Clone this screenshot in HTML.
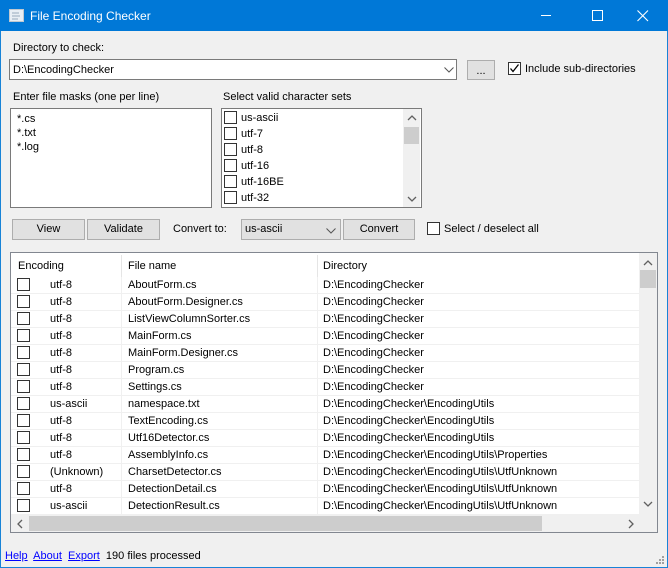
<!DOCTYPE html>
<html><head><meta charset="utf-8"><style>
*{box-sizing:border-box;margin:0;padding:0}
body{width:668px;height:568px;overflow:hidden;background:#f0f0f0;font-family:"Liberation Sans",sans-serif;font-size:11px;color:#000;position:relative}
.a{position:absolute;white-space:nowrap}
.win{position:absolute;left:0;top:0;width:668px;height:568px;border:1px solid #1883d7}
.title{position:absolute;left:0;top:0;width:668px;height:31px;background:#0078d7;color:#fff}
.box{position:absolute;background:#fff;border:1px solid #7a7a7a}
.btn{position:absolute;background:#e1e1e1;border:1px solid #adadad;text-align:center;line-height:19px}
.cb{position:absolute;width:13px;height:13px;border:1px solid #333;background:#fff}
.row{position:absolute;left:11px;width:628px;height:17px;border-bottom:1px solid #f0f0f0}
.row .cb{left:6px;top:1px}
.row span{position:absolute;top:2px}
.vl{position:absolute;top:0;width:1px;height:17px;background:#f0f0f0}
a{color:#0000ff;text-decoration:underline}
</style></head><body>
<div class="win"></div>
<div class="title">
<svg class="a" style="left:9px;top:9px" width="16" height="14"><rect x="0.5" y="0.5" width="14" height="12" fill="#e8eef4" stroke="#c0c8d0"/><path d="M3 4h7M3 7h8M3 10h6" stroke="#9ab" /></svg>
<div class="a" style="left:30px;top:9px;font-size:12px">File Encoding Checker</div>
<div class="a" style="left:541px;top:15px;width:10px;height:1px;background:#fff"></div>
<div class="a" style="left:592px;top:10px;width:11px;height:11px;border:1px solid #fff"></div>
<svg class="a" style="left:637px;top:10px" width="12" height="12"><path d="M0.5 0.5L11 11M11 0.5L0.5 11" stroke="#fff" stroke-width="1.1"/></svg>
</div>
<div class="a" style="left:13px;top:42px">Directory to check:</div>
<div class="box" style="left:9px;top:59px;width:448px;height:21px"><span class="a" style="left:3px;top:4px">D:\EncodingChecker</span>
<svg class="a" style="left:434px;top:7px" width="10" height="6"><path d="M0.5 0.5L5 5 9.5 0.5" fill="none" stroke="#555"/></svg></div>
<div class="btn" style="left:467px;top:60px;width:28px;height:20px;line-height:20px">...</div>
<div class="cb" style="left:508px;top:62px"><svg width="11" height="11" style="position:absolute;left:0;top:0"><path d="M1.5 5.5L4 8.5 9.5 1.5" fill="none" stroke="#000" stroke-width="1.3"/></svg></div>
<div class="a" style="left:525px;top:63px">Include sub-directories</div>
<div class="a" style="left:13px;top:91px">Enter file masks (one per line)</div>
<div class="a" style="left:223px;top:91px">Select valid character sets</div>
<div class="box" style="left:10px;top:108px;width:202px;height:100px;line-height:14px;padding:3px 0 0 6px">*.cs<br>*.txt<br>*.log</div>
<div class="box" style="left:221px;top:108px;width:201px;height:100px">
<div class="cb" style="left:2px;top:2px"></div><span class="a" style="left:19px;top:3px">us-ascii</span>
<div class="cb" style="left:2px;top:18px"></div><span class="a" style="left:19px;top:19px">utf-7</span>
<div class="cb" style="left:2px;top:34px"></div><span class="a" style="left:19px;top:35px">utf-8</span>
<div class="cb" style="left:2px;top:50px"></div><span class="a" style="left:19px;top:51px">utf-16</span>
<div class="cb" style="left:2px;top:66px"></div><span class="a" style="left:19px;top:67px">utf-16BE</span>
<div class="cb" style="left:2px;top:82px"></div><span class="a" style="left:19px;top:83px">utf-32</span>
<div class="a" style="left:181px;top:0;width:17px;height:98px;background:#f0f0f0"></div>
<div class="a" style="left:182px;top:18px;width:15px;height:17px;background:#cdcdcd"></div>
<svg class="a" style="left:185px;top:6px" width="10" height="6"><path d="M1 5L5 1 9 5" fill="none" stroke="#606060" stroke-width="1.3"/></svg>
<svg class="a" style="left:185px;top:87px" width="10" height="6"><path d="M1 1L5 5 9 1" fill="none" stroke="#606060" stroke-width="1.3"/></svg>
</div>
<div class="btn" style="left:12px;top:219px;width:73px;height:21px">View</div>
<div class="btn" style="left:87px;top:219px;width:73px;height:21px">Validate</div>
<div class="a" style="left:173px;top:223px">Convert to:</div>
<div class="btn" style="left:241px;top:219px;width:100px;height:21px;text-align:left;padding-left:3px">us-ascii
<svg class="a" style="left:84px;top:8px" width="10" height="6"><path d="M0.5 0.5L5 5 9.5 0.5" fill="none" stroke="#555"/></svg></div>
<div class="btn" style="left:343px;top:219px;width:72px;height:21px">Convert</div>
<div class="cb" style="left:427px;top:222px"></div>
<div class="a" style="left:444px;top:223px">Select / deselect all</div>
<div class="box" style="left:10px;top:252px;width:648px;height:281px;border-color:#828790">
<div class="a" style="left:0;top:0;width:628px;height:24px;background:#fff"></div>
<div class="a" style="left:110px;top:2px;width:1px;height:22px;background:#e5e5e5"></div>
<div class="a" style="left:306px;top:2px;width:1px;height:22px;background:#e5e5e5"></div>
<span class="a" style="left:7px;top:7px">Encoding</span>
<span class="a" style="left:117px;top:7px">File name</span>
<span class="a" style="left:312px;top:7px">Directory</span>
<div class="a" style="left:628px;top:0;width:18px;height:262px;background:#f0f0f0"></div>
<div class="a" style="left:629px;top:17px;width:16px;height:18px;background:#cdcdcd"></div>
<svg class="a" style="left:632px;top:7px" width="10" height="6"><path d="M1 5L5 1 9 5" fill="none" stroke="#606060" stroke-width="1.3"/></svg>
<svg class="a" style="left:632px;top:248px" width="10" height="6"><path d="M1 1L5 5 9 1" fill="none" stroke="#606060" stroke-width="1.3"/></svg>
<div class="a" style="left:0;top:262px;width:646px;height:17px;background:#f0f0f0"></div>
<div class="a" style="left:18px;top:263px;width:513px;height:15px;background:#cdcdcd"></div>
<svg class="a" style="left:6px;top:266px" width="6" height="10"><path d="M5 1L1 5 5 9" fill="none" stroke="#606060" stroke-width="1.3"/></svg>
<svg class="a" style="left:617px;top:266px" width="6" height="10"><path d="M1 1L5 5 1 9" fill="none" stroke="#606060" stroke-width="1.3"/></svg>
</div>
<div id="rows"></div>
<div class="a" style="left:5px;top:550px"><a>Help</a>&nbsp; <a>About</a>&nbsp; <a>Export</a>&nbsp; 190 files processed</div>
<svg class="a" style="left:655px;top:555px" width="10" height="10"><g fill="#a0a0a0"><rect x="7" y="1" width="2" height="2"/><rect x="4" y="4" width="2" height="2"/><rect x="7" y="4" width="2" height="2"/><rect x="1" y="7" width="2" height="2"/><rect x="4" y="7" width="2" height="2"/><rect x="7" y="7" width="2" height="2"/></g></svg>
<script>
var d=[["utf-8","AboutForm.cs",""],["utf-8","AboutForm.Designer.cs",""],["utf-8","ListViewColumnSorter.cs",""],["utf-8","MainForm.cs",""],["utf-8","MainForm.Designer.cs",""],["utf-8","Program.cs",""],["utf-8","Settings.cs",""],["us-ascii","namespace.txt","\\EncodingUtils"],["utf-8","TextEncoding.cs","\\EncodingUtils"],["utf-8","Utf16Detector.cs","\\EncodingUtils"],["utf-8","AssemblyInfo.cs","\\EncodingUtils\\Properties"],["(Unknown)","CharsetDetector.cs","\\EncodingUtils\\UtfUnknown"],["utf-8","DetectionDetail.cs","\\EncodingUtils\\UtfUnknown"],["us-ascii","DetectionResult.cs","\\EncodingUtils\\UtfUnknown"]];
var h="";
d.forEach(function(r,i){h+='<div class="row" style="top:'+(277+i*17)+'px"><div class="cb"></div><div class="vl" style="left:110px"></div><div class="vl" style="left:306px"></div><span style="left:39px">'+r[0]+'</span><span style="left:117px">'+r[1]+'</span><span style="left:312px">D:\\EncodingChecker'+r[2]+'</span></div>';});
document.getElementById("rows").innerHTML=h;
</script>
</body></html>
